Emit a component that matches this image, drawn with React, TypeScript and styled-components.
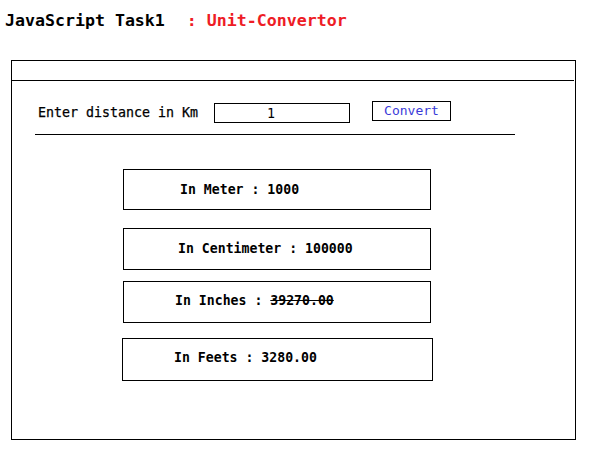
import React from "react";
import styled, { createGlobalStyle } from "styled-components";

const Global = createGlobalStyle`
  html, body { margin: 0; padding: 0; background: #fff; }
  body { font-family: "DejaVu Sans Mono", "Liberation Mono", monospace; color: #000; }
`;

const Page = styled.div`
  width: 603px;
  height: 455px;
  box-sizing: border-box;
  padding: 10px 0 0 0;
`;

const Title = styled.h1`
  margin: 0 0 0 5px;
  font-size: 16.6px;
  line-height: 22px;
  font-weight: bold;
  white-space: pre;
`;

const Accent = styled.span`
  color: #ee1c25;
  margin-left: 22px;
`;

const Frame = styled.div`
  margin: 28px 0 0 11px;
  width: 565px;
  height: 380px;
  box-sizing: border-box;
  border: 1px solid #000;
  display: flex;
  flex-direction: column;
`;

const Header = styled.div`
  height: 19px;
  border-bottom: 1px solid #000;
  margin-right: 1px;
`;

const FormRow = styled.div`
  display: flex;
  align-items: flex-start;
  margin: 20px 0 0 26px;
`;

const Label = styled.label`
  font-size: 13.3px;
  line-height: 18px;
  margin-top: 3px;
  width: 176px;
  white-space: pre;
  -webkit-text-stroke: 0.25px #000;
`;

const Input = styled.input`
  box-sizing: border-box;
  width: 136px;
  height: 20px;
  margin-top: 2px;
  border: 1px solid #000;
  padding: 0 22px 0 0;
  text-align: center;
  font-family: "DejaVu Sans Mono", "Liberation Mono", monospace;
  font-size: 13.3px;
  color: #000;
  background: #fff;
  outline: none;
`;

const Button = styled.button`
  box-sizing: border-box;
  width: 79px;
  height: 20px;
  margin-left: 22px;
  border: 1px solid #000;
  background: #fff;
  padding: 0 0 2px 0;
  font-family: "DejaVu Sans Mono", "Liberation Mono", monospace;
  font-size: 13px;
  color: #3a3ad8;
  cursor: pointer;
`;

const Rule = styled.div`
  margin: 11px 0 0 23px;
  width: 480px;
  height: 1px;
  background: #000;
`;

const Result = styled.div<{ $top: number; $left: number; $w: number; $h: number; $pad: number; $lift: number }>`
  box-sizing: border-box;
  margin: ${(p) => p.$top}px 0 0 ${(p) => p.$left}px;
  width: ${(p) => p.$w}px;
  height: ${(p) => p.$h}px;
  border: 1px solid #000;
  display: flex;
  align-items: center;
  padding: 0 0 ${(p) => p.$lift}px ${(p) => p.$pad}px;
  font-size: 13.2px;
  font-weight: bold;
  white-space: pre;
`;

const Strike = styled.span`
  text-decoration: line-through;
`;

export default function App() {
  return (
    <>
      <Global />
      <Page>
        <Title>
          JavaScript Task1<Accent>: Unit-Convertor</Accent>
        </Title>
        <Frame>
          <Header />
          <FormRow>
            <Label>Enter distance in Km</Label>
            <Input defaultValue="1" />
            <Button>Convert</Button>
          </FormRow>
          <Rule />
          <Result $top={34} $left={111} $w={308} $h={41} $pad={56} $lift={1}>
            In Meter : 1000
          </Result>
          <Result $top={18} $left={111} $w={308} $h={42} $pad={54} $lift={2}>
            In Centimeter : 100000
          </Result>
          <Result $top={11} $left={111} $w={308} $h={42} $pad={51} $lift={4}>
            In Inches : <Strike>39270.00</Strike>
          </Result>
          <Result $top={15} $left={110} $w={311} $h={43} $pad={51} $lift={5}>
            In Feets : 3280.00
          </Result>
        </Frame>
      </Page>
    </>
  );
}
